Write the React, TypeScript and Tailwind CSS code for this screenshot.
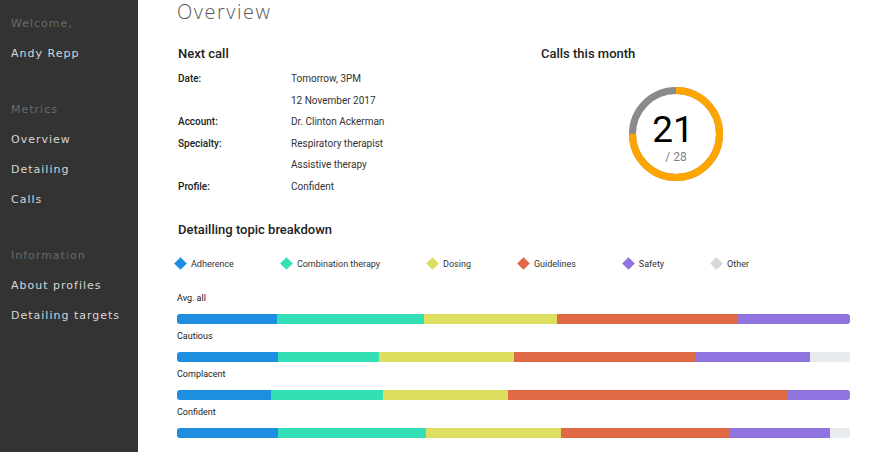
import React from "react";

const legend = [
  { name: "Adherence", color: "bg-[#1e8ee0]" },
  { name: "Combination therapy", color: "bg-[#34dfb5]" },
  { name: "Dosing", color: "bg-[#dddd60]" },
  { name: "Guidelines", color: "bg-[#df6a45]" },
  { name: "Safety", color: "bg-[#8f73df]" },
  { name: "Other", color: "bg-[#d8d8d8]" },
];

const barColors = ["#1e8ee0", "#34dfb5", "#dddd60", "#df6a45", "#8f73df", "#e8ebee"];

// widths in px out of 673
const rows: { label: string; parts: number[] }[] = [
  { label: "Avg. all", parts: [100, 147, 133, 180, 113, 0] },
  { label: "Cautious", parts: [101, 101, 135, 181, 115, 40] },
  { label: "Complacent", parts: [94, 112, 125, 279, 63, 0] },
  { label: "Confident", parts: [101, 148, 135, 169, 100, 20] },
];

const details = [
  ["Date:", "Tomorrow, 3PM"],
  ["", "12 November 2017"],
  ["Account:", "Dr. Clinton Ackerman"],
  ["Specialty:", "Respiratory therapist"],
  ["", "Assistive therapy"],
  ["Profile:", "Confident"],
];

function SideBar() {
  const groups = [
    { title: "Welcome,", items: ["Andy Repp"] },
    { title: "Metrics", items: ["Overview", "Detailing", "Calls"] },
    { title: "Information", items: ["About profiles", "Detailing targets"] },
  ];
  return (
    <div className="w-[138px] shrink-0 bg-[#333333] pt-[9px] pl-[11px] font-['DejaVu_Sans',sans-serif] text-[11px] tracking-[1px]">
      {groups.map((g) => (
        <div key={g.title} className="mb-[25px]">
          <p className="leading-[30.3px] text-[#6a6a6a]">{g.title}</p>
          {g.items.map((it) => (
            <p key={it} className="leading-[30.3px] text-[#d6d6d6]">
              {it}
            </p>
          ))}
        </div>
      ))}
    </div>
  );
}

function Donut() {
  const r = 43.5;
  const c = 2 * Math.PI * r;
  return (
    <div className="relative w-[94px] h-[94px] ml-[88px] mt-[25px]">
      <svg width="94" height="94" viewBox="0 0 94 94">
        <circle cx="47" cy="47" r={r} fill="none" stroke="#8a8a8a" strokeWidth="7" />
        <circle
          cx="47"
          cy="47"
          r={r}
          fill="none"
          stroke="#ffa500"
          strokeWidth="7"
          strokeDasharray={`${c * 0.75} ${c}`}
          transform="rotate(-90 47 47)"
        />
      </svg>
      <div className="absolute inset-0 flex flex-col items-center pt-[27px]">
        <span className="text-[37px] leading-[32px] text-black -ml-[6px]">21</span>
        <span className="text-[12px] leading-[14px] mt-[4px] text-[#808080]">/ 28</span>
      </div>
    </div>
  );
}

export default function App() {
  return (
    <div className="flex min-h-screen bg-white font-['Roboto',sans-serif]">
      <SideBar />
      <div className="flex-1 pl-[39px] pr-[20px]">
        <h1 className="font-['Open_Sans',sans-serif] font-light text-[20px] leading-[24px] tracking-[1.5px] text-[#5a5a5a]">
          Overview
        </h1>

        <div className="flex mt-[22px]">
          <div className="w-[364px] pl-[1px]">
            <p className="text-[13px] leading-[16px] font-medium text-[#222]">Next call</p>
            <div className="mt-[6px]">
              {details.map(([k, v], i) => (
                <div key={i} className="flex text-[10px] leading-[21.6px]">
                  <span className="w-[113px] font-medium text-[#222]">{k}</span>
                  <span className="text-[#333]">{v}</span>
                </div>
              ))}
            </div>
          </div>
          <div>
            <p className="text-[13px] leading-[16px] font-medium text-[#222]">Calls this month</p>
            <Donut />
          </div>
        </div>

        <p className="mt-[24px] pl-[1px] text-[13px] leading-[16px] font-medium text-[#222]">
          Detailling topic breakdown
        </p>

        <div className="flex items-center gap-[48px] mt-[19px] h-[14px] -ml-[1px]">
          {legend.map((l) => (
            <div key={l.name} className="flex items-center gap-[6px]">
              <span className={`inline-block w-[9px] h-[9px] rotate-45 ${l.color}`} />
              <span className="text-[9px] leading-[12px] text-[#333]">{l.name}</span>
            </div>
          ))}
        </div>

        <div className="mt-[20px] w-[673px]">
          {rows.map((row, ri) => (
            <div key={row.label} className={ri === 0 ? "" : "mt-[5px]"}>
              <p className="text-[9px] leading-[14px] text-[#1a1a1a]">{row.label}</p>
              <div className="flex h-[10px] mt-[9px] rounded-[3px] overflow-hidden bg-[#e8ebee]">
                {row.parts.map((w, i) =>
                  w > 0 ? (
                    <div key={i} className="h-full" style={{ width: w, backgroundColor: barColors[i] }} />
                  ) : null
                )}
              </div>
            </div>
          ))}
        </div>
      </div>
    </div>
  );
}
